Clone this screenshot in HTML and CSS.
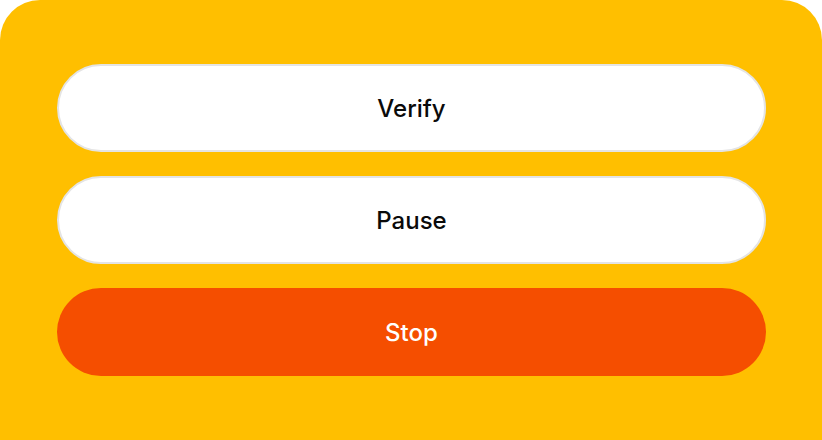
FILE: index.html
```html
<!DOCTYPE html>
<html>
<head>
<meta charset="utf-8">
<link rel="stylesheet" href="styles.css">
</head>
<body>
<div class="panel">
  <button class="btn btn-light">Verify</button>
  <button class="btn btn-light">Pause</button>
  <button class="btn btn-stop">Stop</button>
</div>
</body>
</html>
```
FILE: styles.css
```css
html, body {
  margin: 0;
  padding: 0;
  background: #ffffff;
}
body {
  width: 822px;
  height: 440px;
  overflow: hidden;
}
.panel {
  box-sizing: border-box;
  width: 822px;
  height: 440px;
  background: #ffbf00;
  border-radius: 40px 40px 0 0;
  padding: 64px 56px 0 57px;
  display: flex;
  flex-direction: column;
  gap: 24px;
}
.btn {
  box-sizing: border-box;
  flex: 0 0 88px;
  height: 88px;
  width: 100%;
  border-radius: 44px;
  font-family: Inter, "Noto Sans", sans-serif;
  font-size: 24px;
  font-weight: 500;
  display: flex;
  align-items: center;
  justify-content: center;
  cursor: pointer;
}
.btn-light {
  background: #ffffff;
  color: #0a0a0a;
  border: 2px solid #e4e4e4;
}
.btn-stop {
  background: #f54e00;
  color: #ffffff;
  border: none;
}
```
